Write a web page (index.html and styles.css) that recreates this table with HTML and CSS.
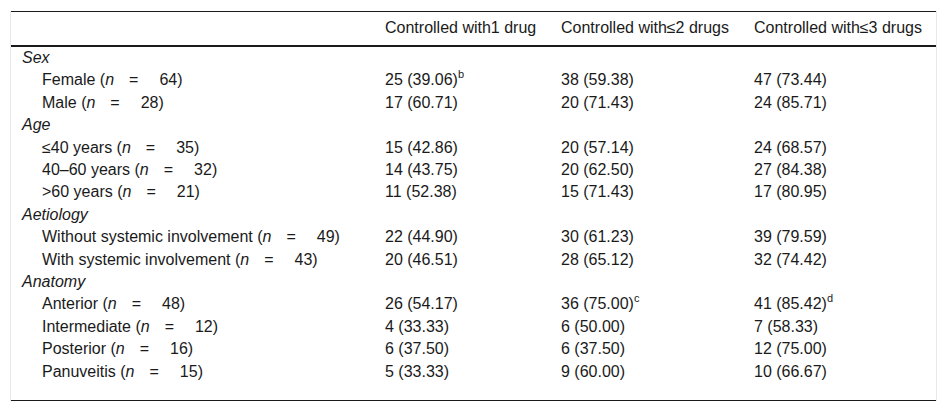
FILE: index.html
```html
<!DOCTYPE html>
<html lang="en">
<head>
<meta charset="utf-8">
<title>Table</title>
<link rel="stylesheet" href="styles.css">
</head>
<body>
<div class="wrap">
<table class="tbl">
<colgroup>
<col class="c1"><col class="c2"><col class="c3"><col class="c4">
</colgroup>
<thead>
<tr><th></th><th>Controlled with1 drug</th><th>Controlled with≤2 drugs</th><th>Controlled with≤3 drugs</th></tr>
</thead>
<tbody>
<tr class="cat"><td><i>Sex</i></td><td></td><td></td><td></td></tr>
<tr><td class="sub">Female (<i>n</i><span class="eq">=</span>64)</td><td>25 (39.06)<sup>b</sup></td><td>38 (59.38)</td><td>47 (73.44)</td></tr>
<tr><td class="sub">Male (<i>n</i><span class="eq">=</span>28)</td><td>17 (60.71)</td><td>20 (71.43)</td><td>24 (85.71)</td></tr>
<tr class="cat"><td><i>Age</i></td><td></td><td></td><td></td></tr>
<tr><td class="sub">≤40 years (<i>n</i><span class="eq">=</span>35)</td><td>15 (42.86)</td><td>20 (57.14)</td><td>24 (68.57)</td></tr>
<tr><td class="sub">40–60 years (<i>n</i><span class="eq">=</span>32)</td><td>14 (43.75)</td><td>20 (62.50)</td><td>27 (84.38)</td></tr>
<tr><td class="sub">&gt;60 years (<i>n</i><span class="eq">=</span>21)</td><td>11 (52.38)</td><td>15 (71.43)</td><td>17 (80.95)</td></tr>
<tr class="cat"><td><i>Aetiology</i></td><td></td><td></td><td></td></tr>
<tr><td class="sub">Without systemic involvement (<i>n</i><span class="eq">=</span>49)</td><td>22 (44.90)</td><td>30 (61.23)</td><td>39 (79.59)</td></tr>
<tr><td class="sub">With systemic involvement (<i>n</i><span class="eq">=</span>43)</td><td>20 (46.51)</td><td>28 (65.12)</td><td>32 (74.42)</td></tr>
<tr class="cat"><td><i>Anatomy</i></td><td></td><td></td><td></td></tr>
<tr><td class="sub">Anterior (<i>n</i><span class="eq">=</span>48)</td><td>26 (54.17)</td><td>36 (75.00)<sup>c</sup></td><td>41 (85.42)<sup>d</sup></td></tr>
<tr><td class="sub">Intermediate (<i>n</i><span class="eq">=</span>12)</td><td>4 (33.33)</td><td>6 (50.00)</td><td>7 (58.33)</td></tr>
<tr><td class="sub">Posterior (<i>n</i><span class="eq">=</span>16)</td><td>6 (37.50)</td><td>6 (37.50)</td><td>12 (75.00)</td></tr>
<tr class="last"><td class="sub">Panuveitis (<i>n</i><span class="eq">=</span>15)</td><td>5 (33.33)</td><td>9 (60.00)</td><td>10 (66.67)</td></tr>
</tbody>
</table>
</div>
</body>
</html>
```
FILE: styles.css
```css
html, body {
  margin: 0;
  padding: 0;
  background: #ffffff;
}
body {
  font-family: "Liberation Sans", Arial, sans-serif;
  font-size: 16px;
  color: #1a1a1a;
}
.wrap {
  margin: 11px 11px 0 10px;
  border-left: 1px solid #e8e8e8;
  border-right: 1px solid #e8e8e8;
}
.tbl {
  width: 100%;
  border-collapse: collapse;
  table-layout: fixed;
  border-top: 1px solid #1a1a1a;
  border-bottom: 1px solid #1a1a1a;
}
.c1 { width: 364px; }
.c2 { width: 176px; }
.c3 { width: 193px; }
.c4 { width: auto; }
.tbl th {
  font-weight: normal;
  text-align: left;
  padding: 7px 10px 8px 10px;
  line-height: 18px;
  border-bottom: 2px solid #1a1a1a;
  white-space: nowrap;
}
.tbl td {
  padding: 2px 10px 2px 10px;
  line-height: 18.4px;
  vertical-align: top;
  white-space: nowrap;
}
.tbl td:first-child {
  padding-left: 11px;
}
.tbl td.sub {
  padding-left: 31px;
}
.tbl tr.last td {
  padding-bottom: 19px;
}
.eq {
  margin: 0 21px 0 15px;
}
sup {
  font-size: 11px;
  line-height: 0;
  vertical-align: 7px;
}
```
